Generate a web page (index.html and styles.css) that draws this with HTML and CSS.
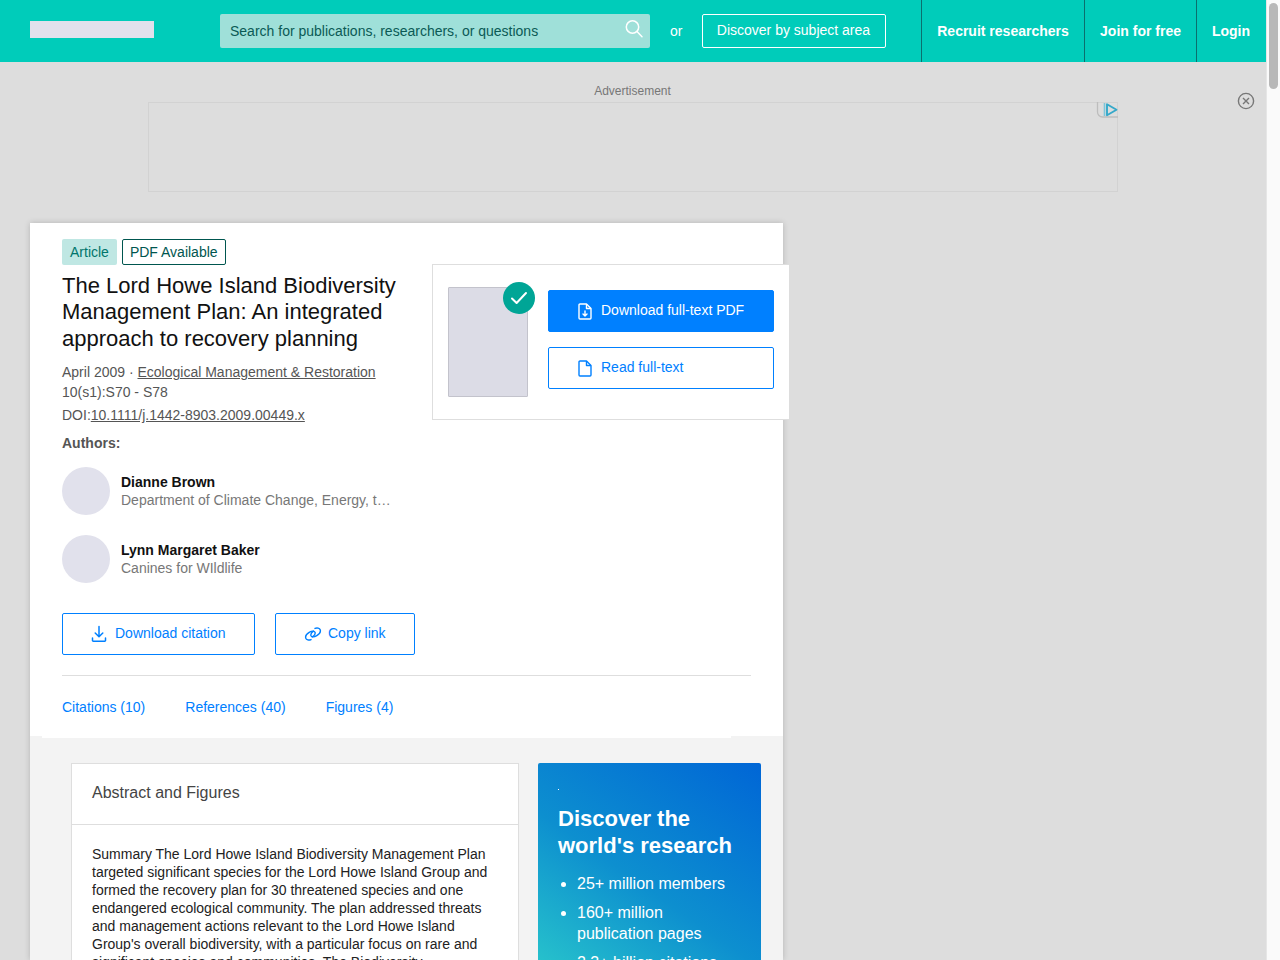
FILE: index.html
```html
<!DOCTYPE html>
<html lang="en">
<head>
<meta charset="utf-8">
<title>The Lord Howe Island Biodiversity Management Plan</title>
<link rel="stylesheet" href="styles.css">
</head>
<body>
<div class="page">
  <header class="topbar">
    <div class="logo"></div>
    <div class="search">
      <span class="search-text">Search for publications, researchers, or questions</span>
      <svg class="search-icon" width="20" height="20" viewBox="0 0 20 20" fill="none" stroke="#fff" stroke-width="1.5"><circle cx="8.5" cy="8" r="6.2"/><path d="M13 12.6l5 5.2" stroke-linecap="round"/></svg>
    </div>
    <span class="or">or</span>
    <a class="discover">Discover by subject area</a>
    <nav class="nav">
      <a class="nav-item nav-recruit">Recruit researchers</a>
      <a class="nav-item nav-join">Join for free</a>
      <a class="nav-item nav-login">Login</a>
    </nav>
  </header>

  <section class="ad-zone">
    <div class="ad-label">Advertisement</div>
    <div class="ad-box">
      <svg class="ad-choice" width="22" height="16" viewBox="0 0 22 16" fill="none"><path d="M1.5 0v10a5 5 0 0 0 5 5H22" stroke="#bdbdbd" stroke-width="1.3"/><path d="M8.5 1v13" stroke="#7cc6da" stroke-width="1.6"/><path d="M11 2.2v11l9.5-5.5z" stroke="#35a8c9" stroke-width="1.9" stroke-linejoin="round"/></svg>
    </div>
    <svg class="ad-close" width="18" height="18" viewBox="0 0 18 18" fill="none" stroke="#777" stroke-width="1.4"><circle cx="9" cy="9" r="7.6"/><path d="M6 6l6 6M12 6l-6 6"/></svg>
  </section>

  <main class="article">
    <div class="article-head">
      <div class="badges">
        <span class="badge badge-fill">Article</span>
        <span class="badge badge-line">PDF Available</span>
      </div>
      <h1 class="title">The Lord Howe Island Biodiversity Management Plan: An integrated approach to recovery planning</h1>
      <div class="meta meta-date">April 2009 · <a class="meta-link">Ecological Management &amp; Restoration</a></div>
      <div class="meta meta-vol">10(s1):S70 - S78</div>
      <div class="meta meta-doi">DOI:<a class="meta-link">10.1111/j.1442-8903.2009.00449.x</a></div>
      <div class="authors-label">Authors:</div>
      <div class="author">
        <div class="avatar"></div>
        <div class="author-info">
          <div class="author-name">Dianne Brown</div>
          <div class="author-aff">Department of Climate Change, Energy, the Environment and Water</div>
        </div>
      </div>
      <div class="author">
        <div class="avatar"></div>
        <div class="author-info">
          <div class="author-name">Lynn Margaret Baker</div>
          <div class="author-aff">Canines for WIldlife</div>
        </div>
      </div>
      <div class="actions">
        <a class="btn btn-citation">
          <svg width="16" height="18" viewBox="0 0 16 18" fill="none" stroke="#0080ff" stroke-width="1.5" stroke-linecap="round" stroke-linejoin="round"><path d="M8 1.5v10M4.2 8l3.8 3.8L11.8 8M1.5 13v2.5a.8.8 0 0 0 .8.8h11.4a.8.8 0 0 0 .8-.8V13"/></svg>
          Download citation
        </a>
        <a class="btn btn-copy">
          <svg width="18" height="14" viewBox="0 0 18 14" fill="none" stroke="#0080ff" stroke-width="1.4" stroke-linecap="round"><path d="M7 12.6c-2.2 1-4.6.2-5.2-1.4-.6-1.8.9-4.4 3.4-5.9 2.7-1.6 5.2-1.6 5.8 0 .5 1.5-.6 3.4-2.5 4.6"/><path d="M11 1.4c2.2-1 4.6-.2 5.2 1.4.6 1.8-.9 4.4-3.4 5.9-2.7 1.6-5.2 1.6-5.8 0-.5-1.5.6-3.4 2.5-4.6"/></svg>
          Copy link
        </a>
      </div>
      <div class="tabs">
        <a class="tab">Citations (10)</a>
        <a class="tab">References (40)</a>
        <a class="tab">Figures (4)</a>
      </div>
    </div>

    <aside class="fulltext-card">
      <div class="preview">
        <span class="check">
          <svg width="18" height="14" viewBox="0 0 18 14" fill="none" stroke="#fff" stroke-width="2" stroke-linecap="round" stroke-linejoin="round"><path d="M2 7.5l4.6 4.5L16 2"/></svg>
        </span>
      </div>
      <div class="fulltext-actions">
        <a class="btn btn-primary">
          <svg width="14" height="17" viewBox="0 0 14 17" fill="none" stroke="#fff" stroke-width="1.4" stroke-linejoin="round"><path d="M1 2a1 1 0 0 1 1-1h6.5L13 5.5V15a1 1 0 0 1-1 1H2a1 1 0 0 1-1-1z"/><path d="M8.5 1v4.5H13"/><path d="M7 8v5M5 11l2 2 2-2" stroke-linecap="round"/></svg>
          Download full-text PDF
        </a>
        <a class="btn btn-read">
          <svg width="14" height="17" viewBox="0 0 14 17" fill="none" stroke="#0080ff" stroke-width="1.4" stroke-linejoin="round"><path d="M1 2a1 1 0 0 1 1-1h6.5L13 5.5V15a1 1 0 0 1-1 1H2a1 1 0 0 1-1-1z"/><path d="M8.5 1v4.5H13"/></svg>
          Read full-text
        </a>
      </div>
    </aside>

    <div class="article-body">
      <div class="tab-tail"></div>
      <div class="columns">
        <section class="abstract">
          <h2 class="abstract-title">Abstract and Figures</h2>
          <p class="abstract-text">Summary The Lord Howe Island Biodiversity Management Plan targeted significant species for the Lord Howe Island Group and formed the recovery plan for 30 threatened species and one endangered ecological community. The plan addressed threats and management actions relevant to the Lord Howe Island Group's overall biodiversity, with a particular focus on rare and significant species and communities. The Biodiversity Management Plan</p>
        </section>
        <aside class="promo">
          <div class="promo-dot"></div>
          <h3 class="promo-title">Discover the world's research</h3>
          <ul class="promo-list">
            <li>25+ million members</li>
            <li>160+ million publication pages</li>
            <li>2.3+ billion citations</li>
          </ul>
        </aside>
      </div>
    </div>
  </main>

  <div class="scrollbar"><div class="scroll-thumb"></div></div>
</div>
</body>
</html>
```
FILE: styles.css
```css
* { box-sizing: border-box; }
html, body { margin: 0; padding: 0; height: 960px; overflow: hidden; }
body { font-family: "Liberation Sans", Arial, sans-serif; font-size: 14px; color: #111; background: #dddddd; }
a { color: inherit; text-decoration: none; }

.page { position: relative; width: 1280px; height: 960px; padding-right: 14px; overflow: hidden; }

.topbar { display: flex; align-items: center; height: 62px; background: #00ccba; padding-left: 30px; }
.logo { width: 124px; height: 17px; background: #e1e1ec; margin: 0 66px 3px 0; }
.search { display: flex; align-items: center; justify-content: space-between; width: 430px; height: 34px; padding: 0 6px 0 10px; background: #9fe0d9; border-radius: 2px; }
.search-text { color: #0b5a55; font-size: 14px; }
.search-icon { margin-top: -4px; }
.or { color: #fff; font-size: 14px; margin: 0 20px 0 20px; }
.discover { display: flex; align-items: center; justify-content: center; width: 184px; height: 34px; border: 1px solid #fff; border-radius: 2px; color: #fff; font-size: 14px; padding: 0 2px 2px 0; }
.nav { display: flex; height: 62px; margin-left: auto; }
.nav-item { display: flex; align-items: center; justify-content: center; height: 62px; border-left: 1px solid #0b6f6e; color: #fff; font-size: 14px; font-weight: 700; }
.nav-recruit { width: 163px; }
.nav-join { width: 112px; }
.nav-login { width: 70px; padding-right: 1px; }

.ad-zone { position: relative; display: flex; flex-direction: column; align-items: center; height: 161px; padding: 22px 0 0 0; }
.ad-label { font-size: 12px; line-height: 14px; height: 18px; color: #777; margin-right: 1px; }
.ad-box { position: relative; width: 970px; height: 90px; border: 1px solid #d2d2d2; }
.ad-choice { position: absolute; top: -1px; right: -1px; }
.ad-close { position: absolute; top: 30px; right: 11px; }

.article { position: relative; width: 753px; height: 737px; margin-left: 30px; background: #f3f3f3; box-shadow: 0 0 6px rgba(0,0,0,.18); }
.article-head { height: 513px; padding: 16px 32px 0; background: #fff; }
.badges { display: flex; gap: 5px; }
.badge { display: flex; align-items: center; height: 26px; padding: 0 8px; border-radius: 2px; font-size: 14px; }
.badge-fill { background: #bfe7e3; color: #00756b; }
.badge-line { border: 1px solid #00564f; color: #00564f; padding: 0 7px; }
.title { width: 350px; margin: 8px 0 0; font-size: 22px; line-height: 26.4px; font-weight: 400; color: #111; }
.meta { font-size: 14px; line-height: 18px; color: #555; }
.meta-link { text-decoration: underline; }
.meta-date { margin-top: 10.8px; }
.meta-vol { margin-top: 2px; }
.meta-doi { margin-top: 5px; }
.authors-label { margin-top: 10px; font-size: 14px; line-height: 18px; font-weight: 700; color: #555; }
.author { display: flex; align-items: center; gap: 11px; width: 330px; height: 48px; margin-top: 15px; }
.author + .author { margin-top: 20px; }
.avatar { flex: none; width: 48px; height: 48px; border-radius: 50%; background: #e1e1ec; }
.author-info { min-width: 0; flex: 1; }
.author-name { font-size: 14px; line-height: 18px; font-weight: 700; color: #111; }
.author-aff { font-size: 14px; line-height: 18px; color: #777; white-space: nowrap; overflow: hidden; text-overflow: ellipsis; }
.actions { display: flex; gap: 20px; margin-top: 30px; padding-bottom: 20px; border-bottom: 1px solid #dedede; width: 689px; }
.btn { display: flex; align-items: center; height: 42px; border: 1px solid #0080ff; border-radius: 2px; color: #0080ff; font-size: 14px; background: #fff; padding-bottom: 2px; }
.btn svg { margin-top: 2px; }
.btn-citation { width: 193px; padding-left: 28px; gap: 8px; }
.btn-copy { width: 140px; padding-left: 28px; gap: 6px; }
.tabs { display: flex; gap: 40px; margin-top: 22px; }
.tab { font-size: 14px; line-height: 18px; color: #0080ff; }

.fulltext-card { position: absolute; top: 41px; left: 402px; display: flex; gap: 20px; width: 357px; height: 156px; padding: 22px 15px 0; background: #fff; border: 1px solid #dedede; border-right: 0; }
.preview { position: relative; flex: none; width: 80px; height: 110px; background: #dcdce6; border: 1px solid #c3c3cc; border-radius: 1px; }
.check { position: absolute; top: -6px; right: -8px; display: flex; align-items: center; justify-content: center; width: 32px; height: 32px; border-radius: 50%; background: #00a596; }
.fulltext-actions { display: flex; flex-direction: column; gap: 15px; width: 226px; padding-top: 3px; }
.btn-primary { background: #0080ff; color: #fff; padding-left: 29px; gap: 9px; }
.btn-read { padding-left: 29px; gap: 9px; }

.article-body { height: 224px; }
.tab-tail { width: 689px; height: 2px; margin-left: 12px; background: #fff; }
.columns { display: flex; gap: 19px; padding: 25px 22px 0 41px; }
.abstract { flex: none; width: 448px; height: 300px; background: #fff; border: 1px solid #dedede; }
.abstract-title { margin: 0; height: 61px; padding: 0 20px; font-size: 16px; line-height: 57px; font-weight: 400; color: #444; border-bottom: 1px solid #dedede; }
.abstract-text { margin: 0; padding: 20px 20px 0; font-size: 14px; line-height: 18px; color: #222; }
.promo { flex: none; width: 223px; height: 300px; padding: 26px 20px 0; border-radius: 2px; background: linear-gradient(215deg, #0066d6 0%, #0d8fcf 45%, #2ccccb 85%); color: #fff; }
.promo-dot { width: 1px; height: 1px; background: #fff; }
.promo-title { margin: 15px 0 0; font-size: 22px; line-height: 27px; font-weight: 700; }
.promo-list { margin: 14px 0 0; padding: 0 0 0 19px; font-size: 16px; line-height: 21px; }
.promo-list li { margin-bottom: 8px; }

.scrollbar { position: absolute; top: 0; right: 0; width: 14px; height: 960px; background: #fafafa; border-left: 1px solid #e6e6e6; padding: 3px 0 0 2px; }
.scroll-thumb { width: 9px; height: 86px; border-radius: 5px; background: #b8b8b8; }
```
